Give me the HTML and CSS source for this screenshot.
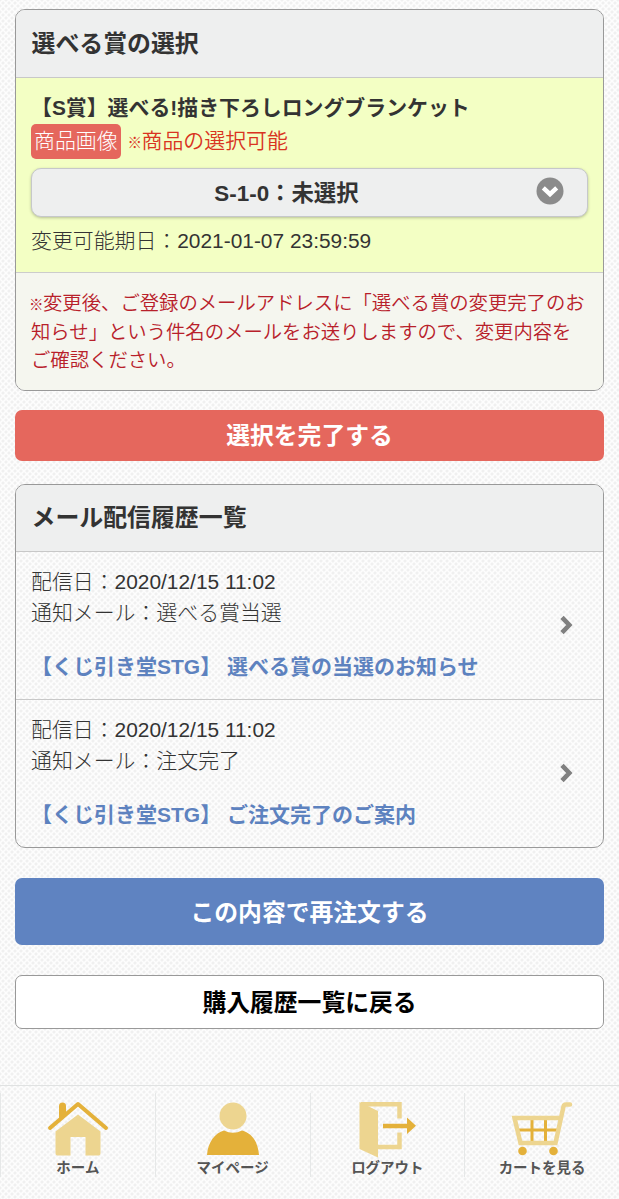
FILE: index.html
```
<!DOCTYPE html>
<html lang="ja">
<head>
    <meta charset="UTF-8">
    <title>購入履歴</title>
    <link rel="stylesheet" href="styles.css">
</head>
<body>
<main class="page">
    <section class="panel prize">
        <h2>選べる賞の選択</h2>
        <div class="prize-item">
            <h3>【S賞】選べる!描き下ろしロングブランケット</h3>
            <div class="prize-info">
                <a class="image-link">商品画像</a>
                <span class="selectable"><span class="mark">※</span>商品の選択可能</span>
            </div>
            <div class="select">
                <span>S-1-0：未選択</span>
                <svg class="select-icon" width="28" height="28" viewBox="0 0 28 28">
                    <circle cx="14" cy="14" r="13.5" fill="#8b8b8b"/>
                    <path d="M7.3 10.8L14 17.2L20.7 10.8" fill="none" stroke="#fff" stroke-width="4.4"/>
                </svg>
            </div>
            <p class="limit">変更可能期日：2021-01-07 23:59:59</p>
        </div>
        <p class="note"><span class="mark">※</span>変更後、ご登録のメールアドレスに「選べる賞の変更完了のお<br>知らせ」という件名のメールをお送りしますので、変更内容を<br>ご確認ください。</p>
    </section>

    <button class="btn btn-red">選択を完了する</button>

    <section class="panel mails">
        <h2>メール配信履歴一覧</h2>
        <a class="mail">
            <div>
                <p>配信日：2020/12/15 11:02</p>
                <p>通知メール：選べる賞当選</p>
                <p class="subject">【くじ引き堂STG】 選べる賞の当選のお知らせ</p>
            </div>
            <svg width="16" height="20" viewBox="0 0 16 20">
                <path d="M3 2.4L10.3 10L3 17.6" fill="none" stroke="#808080" stroke-width="4.6"/>
            </svg>
        </a>
        <a class="mail">
            <div>
                <p>配信日：2020/12/15 11:02</p>
                <p>通知メール：注文完了</p>
                <p class="subject">【くじ引き堂STG】 ご注文完了のご案内</p>
            </div>
            <svg width="16" height="20" viewBox="0 0 16 20">
                <path d="M3 2.4L10.3 10L3 17.6" fill="none" stroke="#808080" stroke-width="4.6"/>
            </svg>
        </a>
    </section>

    <button class="btn btn-blue">この内容で再注文する</button>
    <button class="btn btn-white">購入履歴一覧に戻る</button>
</main>

<nav class="footer-nav">
    <a>
        <svg width="62" height="58" viewBox="0 0 62 58">
            <path d="M12 19V6a3.500 3.500 0 0 1 7 0V13z" fill="#e4b13a"/>
            <path d="M3 28L31 4L59 28" fill="none" stroke="#e4b13a" stroke-width="4" stroke-linecap="round" stroke-linejoin="round"/>
            <path d="M8.500 31.500L31 14.500L53.500 31.500V53.500a2 2 0 0 1-2 2H38.500V37h-15V55.500H10.500a2 2 0 0 1-2-2z" fill="#edd590"/>
        </svg>
        <span>ホーム</span>
    </a>
    <a>
        <svg width="62" height="58" viewBox="0 0 62 58">
            <circle cx="31" cy="16" r="13.500" fill="#edd590"/>
            <path d="M5 55C6 42 13 33 22 30.500Q31 35 40 30.500C50 33 56 42 57 55z" fill="#e4b13a"/>
        </svg>
        <span>マイページ</span>
    </a>
    <a>
        <svg width="62" height="58" viewBox="0 0 62 58">
            <path d="M5 4.200H43.500V18.500" fill="none" stroke="#edd590" stroke-width="4.500"/>
            <path d="M43.500 32.500V47H20" fill="none" stroke="#edd590" stroke-width="4.500"/>
            <path d="M3.500 2L22 11V57.500L3.500 49z" fill="#edd590"/>
            <path d="M27 23.800H51V17.500L60 25.800L51 34V28.200H27z" fill="#e4b13a"/>
        </svg>
        <span>ログアウト</span>
    </a>
    <a>
        <svg width="62" height="58" viewBox="0 0 62 58">
            <path d="M21 18V41M34.500 18V41M8 30H47" stroke="#e4b13a" stroke-width="3" fill="none"/>
            <path d="M59 4.500H55Q53 4.500 52.500 6.500L44.500 43H9.500L3.500 18H49" fill="none" stroke="#edd590" stroke-width="4.500" stroke-linecap="round"/>
            <circle cx="11.500" cy="51" r="4.300" fill="#e4b13a"/>
            <circle cx="42.500" cy="51" r="4.300" fill="#e4b13a"/>
        </svg>
        <span>カートを見る</span>
    </a>
</nav>
</body>
</html>
```
FILE: styles.css
```
* {
    box-sizing: border-box;
}

body {
    margin: 0;
    font-family: "Liberation Sans", "Noto Sans CJK JP", sans-serif;
    font-size: 20.9px;
    font-weight: 300;
    color: #333;
    background-color: #fdfdfd;
    background-image:
        radial-gradient(circle at 50% 50%, #f0f0f0 1px, transparent 2px),
        radial-gradient(circle at 50% 50%, #f0f0f0 1px, transparent 2px);
    background-size: 6px 6px;
    background-position: 0 0, 3px 3px;
}

h2, h3, p {
    margin: 0;
}

.page {
    display: flex;
    flex-direction: column;
    padding: 9px 15px 0;
}

.panel {
    border: 1px solid #999;
    border-radius: 10px;
    overflow: hidden;
}

.panel h2 {
    height: 68px;
    padding: 0 15.5px;
    border-bottom: 1px solid #c8c8c8;
    background: #eeefef;
    font-size: 23.9px;
    line-height: 67px;
}

.prize {
    height: 382px;
}

.prize-item {
    height: 195px;
    padding: 14px 15px 0;
    background: #f3ffc4;
    border-bottom: 1px solid #ccc;
}

.prize-item h3 {
    font-size: 20.9px;
    line-height: 31px;
}

.prize-info {
    display: flex;
    align-items: center;
    gap: 9px;
    height: 35px;
    margin-top: 1px;
    line-height: 33px;
}

.image-link {
    height: 35px;
    padding: 0 3px;
    border-radius: 5px;
    background: #e5675d;
    color: #fff;
}

.selectable {
    height: 35px;
    color: #d9341f;
    font-weight: 350;
}

.mark {
    display: inline-block;
    width: 13px;
    margin-left: -1px;
    font-size: 14.5px;
    font-weight: 900;
    line-height: 1;
    text-indent: -1px;
}

.select {
    display: flex;
    align-items: center;
    height: 49px;
    margin-top: 9px;
    padding-right: 23px;
    padding-bottom: 3px;
    border: 1px solid #c6c8ca;
    border-radius: 10px;
    background: #eeefef;
    box-shadow: 0 1px 3px rgba(0, 0, 0, 0.25);
    font-size: 22.4px;
    font-weight: bold;
}

.select span {
    flex: 1;
    padding-left: 5px;
    padding-bottom: 1px;
    text-align: center;
}

.limit {
    margin-top: 8px;
    line-height: 32px;
}

.note {
    height: 117px;
    padding: 16px 15px 0;
    background: #f5f6ef;
    color: #b8202a;
    font-size: 19.35px;
    font-weight: 350;
    line-height: 28.5px;
    white-space: nowrap;
}

.btn {
    padding: 0 0 4px;
    border: none;
    border-radius: 7px;
    font-family: inherit;
    font-size: 23.8px;
    font-weight: bold;
}

.btn-red {
    height: 51px;
    margin-top: 19px;
    background: #e5675d;
    color: #fff;
}

.mails {
    height: 364px;
    margin-top: 23px;
}

.mails h2 {
    height: 67px;
    line-height: 66px;
}

.mail {
    display: flex;
    align-items: center;
    justify-content: space-between;
    height: 147px;
    padding: 0 28px 2px 15px;
    line-height: 31px;
}

.mail div {
    margin-top: -2px;
}

.mail + .mail {
    height: 148px;
    border-top: 1px solid #c8c8c8;
}

.subject {
    margin-top: 23px;
    color: #5d82bf;
    font-size: 21px;
    font-weight: bold;
}

.btn-blue {
    height: 67px;
    margin-top: 30px;
    padding-bottom: 2px;
    background: #5f83c1;
    color: #fff;
}

.btn-white {
    height: 54px;
    margin-top: 30px;
    border: 1px solid #999;
    background: #fff;
    color: #000;
}

.footer-nav {
    display: grid;
    grid-template-columns: repeat(4, 1fr);
    height: 114px;
    margin-top: 56px;
    padding-top: 7px;
    border-top: 1px solid #e0e2e2;
}

.footer-nav a {
    display: flex;
    flex-direction: column;
    align-items: center;
    height: 84px;
    padding-top: 7px;
    border-left: 1px solid #e6e8e8;
    color: #555;
    font-size: 14.5px;
    font-weight: bold;
    line-height: 20px;
}

.footer-nav svg {
    flex-shrink: 0;
}
```
